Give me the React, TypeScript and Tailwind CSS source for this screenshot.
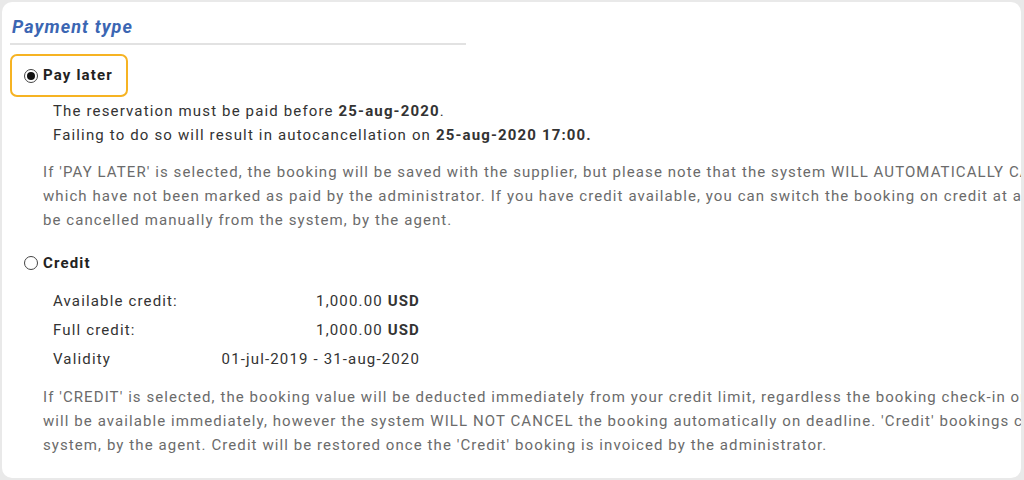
export default function App() {
  return (
    <div className="w-[1024px] h-[480px] bg-[#e9e9e9] p-[2px] font-['Roboto',sans-serif] tracking-[1.15px]">
      <div className="h-[476px] w-[1019px] bg-white rounded-[10px] overflow-hidden">
        {/* heading */}
        <div className="pt-[13px] pl-[10px]">
          <h2 className="text-[18px] leading-[24px] font-bold italic text-[#3b66b3] tracking-[1.1px]">Payment type</h2>
        </div>
        <div className="ml-[8px] mt-[4px] w-[456px] h-[2px] bg-[#e2e2e2]" />

        {/* pay later */}
        <div className="ml-[8px] mt-[9px] w-[118px] h-[43px] border-2 border-[#f6b323] rounded-[7px] flex items-center pl-[12px] gap-[5px]">
          <span className="w-[14px] h-[14px] rounded-full border-[1.5px] border-[#444] flex items-center justify-center">
            <span className="w-[8px] h-[8px] rounded-full bg-[#111]" />
          </span>
          <span className="text-[15px] font-bold text-[#222]">Pay later</span>
        </div>
        <div className="ml-[51px] mt-[2px] text-[15px] leading-[24px] text-[#333] whitespace-nowrap">
          <div>The reservation must be paid before <b>25-aug-2020</b>.</div>
          <div>Failing to do so will result in autocancellation on <b>25-aug-2020 17:00.</b></div>
        </div>
        <div className="ml-[41px] mt-[13px] text-[15px] leading-[24px] text-[#6b6b6b] whitespace-nowrap tracking-[1.08px]">
          <div>If 'PAY LATER' is selected, the booking will be saved with the supplier, but please note that the system WILL AUTOMATICALLY CANCEL all bookings on deadline,</div>
          <div>which have not been marked as paid by the administrator. If you have credit available, you can switch the booking on credit at any time. 'Pay later' bookings can also</div>
          <div>be cancelled manually from the system, by the agent.</div>
        </div>

        {/* credit */}
        <div className="ml-[22px] mt-[19px] flex items-center gap-[5px] h-[24px]">
          <span className="w-[14px] h-[14px] rounded-full border-[1.5px] border-[#444]" />
          <span className="text-[15px] font-bold text-[#222]">Credit</span>
        </div>
        <div className="ml-[51px] mt-[12px] text-[15px] text-[#333] w-[367px]">
          <div className="flex justify-between h-[29px] items-center">
            <span>Available credit:</span>
            <span>1,000.00 <b>USD</b></span>
          </div>
          <div className="flex justify-between h-[29px] items-center">
            <span>Full credit:</span>
            <span>1,000.00 <b>USD</b></span>
          </div>
          <div className="flex justify-between h-[29px] items-center">
            <span>Validity</span>
            <span>01-jul-2019 - 31-aug-2020</span>
          </div>
        </div>
        <div className="ml-[41px] mt-[11px] text-[15px] leading-[24px] text-[#6b6b6b] whitespace-nowrap tracking-[1.08px]">
          <div>If 'CREDIT' is selected, the booking value will be deducted immediately from your credit limit, regardless the booking check-in or deadline date. The booking</div>
          <div>will be available immediately, however the system WILL NOT CANCEL the booking automatically on deadline. 'Credit' bookings can be cancelled only manually from the</div>
          <div>system, by the agent. Credit will be restored once the 'Credit' booking is invoiced by the administrator.</div>
        </div>
      </div>
    </div>
  );
}
